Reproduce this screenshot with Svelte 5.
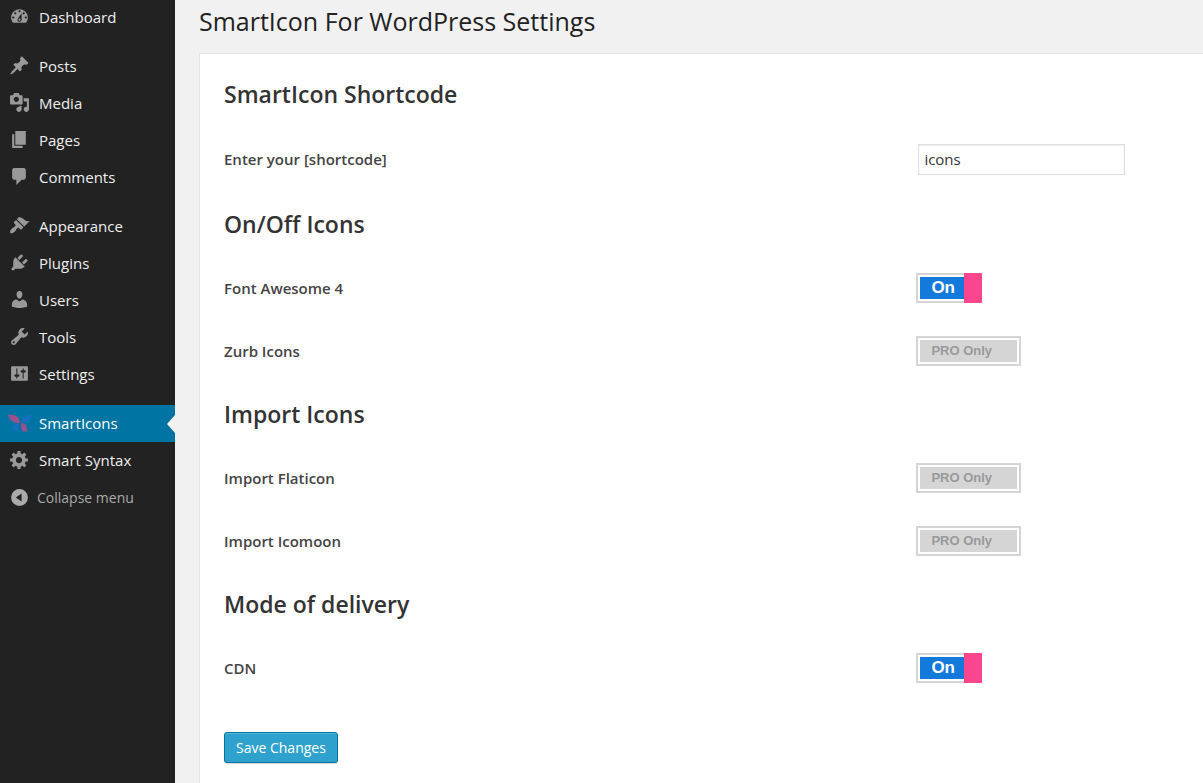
<script>
  const icons = {
    dashboard: 'M3.76 16h12.48c1.1-1.37 1.76-3.11 1.76-5 0-4.42-3.58-8-8-8s-8 3.58-8 8c0 1.89.66 3.63 1.76 5zM10 4c.55 0 1 .45 1 1s-.45 1-1 1-1-.45-1-1 .45-1 1-1zM6 6c.55 0 1 .45 1 1s-.45 1-1 1-1-.45-1-1 .45-1 1-1zm8 0c.55 0 1 .45 1 1s-.45 1-1 1-1-.45-1-1 .45-1 1-1zm-5.37 5.55L12 7v6c0 1.1-.9 2-2 2s-2-.9-2-2c0-.57.24-1.08.63-1.45zM4 10c.55 0 1 .45 1 1s-.45 1-1 1-1-.45-1-1 .45-1 1-1zm12 0c.55 0 1 .45 1 1s-.45 1-1 1-1-.45-1-1 .45-1 1-1zm-5 3c0-.55-.45-1-1-1s-1 .45-1 1 .45 1 1 1 1-.45 1-1z',
    post: 'M10.44 3.02l1.82-1.82 6.36 6.35-1.83 1.82c-1.05-.68-2.48-.57-3.41.36l-.75.75c-.92.93-1.04 2.35-.35 3.41l-1.83 1.82-2.41-2.41-2.8 2.79c-.42.42-3.38 2.71-3.8 2.29s1.86-3.39 2.28-3.81l2.79-2.79L4.1 9.36l1.83-1.82c1.05.69 2.48.57 3.4-.36l.75-.75c.93-.92 1.05-2.35.36-3.41z',
    media: 'M13 11V4c0-.55-.45-1-1-1h-1.67L9 1H5L3.67 3H2c-.55 0-1 .45-1 1v7c0 .55.45 1 1 1h10c.55 0 1-.45 1-1zM7 4.5c1.38 0 2.5 1.12 2.5 2.5S8.38 9.5 7 9.5 4.5 8.38 4.5 7 5.62 4.5 7 4.5zM14 6h5v10.5c0 1.38-1.12 2.5-2.5 2.5S14 17.88 14 16.5s1.12-2.5 2.5-2.5c.17 0 .34.02.5.05V9h-3V6zm-4 8.05V13h2v3.5c0 1.38-1.12 2.5-2.5 2.5S7 17.88 7 16.5 8.12 14 9.5 14c.17 0 .34.02.5.05z',
    page: 'M6 15V2h10v13H6zm-1 1h8v2H3V5h2v11z',
    comments: 'M5 2h9c1.1 0 2 .9 2 2v7c0 1.1-.9 2-2 2h-2l-5 5v-5H5c-1.1 0-2-.9-2-2V4c0-1.1.9-2 2-2z',
    appearance: 'M14.48 11.06L7.41 3.99l1.5-1.5c.5-.56 2.3-.47 3.51.32 1.21.8 1.43 1.28 2.91 2.1 1.18.64 2.45 1.26 4.45.85zm-.71.71L6.7 4.7 4.93 6.47c-.39.39-.39 1.02 0 1.41l1.06 1.06c.39.39.39 1.03 0 1.42-.6.6-1.43 1.11-2.21 1.69-.35.26-.7.53-1.01.84C1.43 14.23.4 16.08 1.4 17.07c.99 1 2.84-.03 4.18-1.36.31-.31.58-.66.85-1.02.57-.78 1.08-1.61 1.69-2.21.39-.39 1.02-.39 1.41 0l1.06 1.06c.39.39 1.02.39 1.41 0z',
    plugins: 'M13.11 4.36L9.87 7.6 8 5.73l3.24-3.24c.35-.34 1.05-.2 1.56.32.52.51.66 1.21.31 1.55zm-8 1.77l.91-1.12 9.01 9.01-1.19.84c-.71.71-2.63 1.16-3.82 1.16H6.14L4.9 17.26c-.59.59-1.54.59-2.12 0-.59-.58-.59-1.53 0-2.12l1.24-1.24v-3.88c0-1.13.4-3.19 1.09-3.89zm7.26 3.97l3.24-3.24c.34-.35 1.04-.21 1.55.31.52.51.66 1.21.31 1.55l-3.24 3.25z',
    users: 'M10 9.25c-2.27 0-2.73-3.44-2.73-3.44C7 4.02 7.82 2 9.97 2c2.16 0 2.98 2.02 2.71 3.81 0 0-.41 3.44-2.68 3.44zm0 2.57L12.72 10c2.39 0 4.52 2.33 4.52 4.53v2.49s-3.65 1.13-7.24 1.13c-3.65 0-7.24-1.13-7.24-1.13v-2.49c0-2.25 1.94-4.48 4.47-4.48z',
    tools: 'M16.68 9.77c-1.34 1.34-3.3 1.67-4.95.99l-5.41 6.52c-.99.99-2.59.99-3.58 0s-.99-2.59 0-3.57l6.52-5.42c-.68-1.65-.35-3.61.99-4.95 1.28-1.28 3.12-1.62 4.72-1.06l-2.89 2.89 2.82 2.82 2.86-2.87c.53 1.58.18 3.39-1.08 4.65zM3.81 16.21c.4.39 1.04.39 1.43 0 .4-.4.4-1.04 0-1.43-.39-.4-1.03-.4-1.43 0-.39.39-.39 1.03 0 1.43z',
    settings: 'M18 16V4c0-.55-.45-1-1-1H3c-.55 0-1 .45-1 1v12c0 .55.45 1 1 1h14c.55 0 1-.45 1-1zM8 11h1c.55 0 1 .45 1 1s-.45 1-1 1H8v1.5c0 .28-.22.5-.5.5s-.5-.22-.5-.5V13H6c-.55 0-1-.45-1-1s.45-1 1-1h1V5.5c0-.28.22-.5.5-.5s.5.22.5.5V11zm5-2h-1c-.55 0-1-.45-1-1s.45-1 1-1h1V5.5c0-.28.22-.5.5-.5s.5.22.5.5V7h1c.55 0 1 .45 1 1s-.45 1-1 1h-1v5.5c0 .28-.22.5-.5.5s-.5-.22-.5-.5V9z',
    generic: 'M18 12h-2.18c-.17.7-.44 1.35-.81 1.93l1.54 1.54-2.1 2.1-1.54-1.54c-.58.36-1.23.63-1.91.79V19H8v-2.18c-.68-.16-1.33-.43-1.91-.79l-1.54 1.54-2.12-2.12 1.54-1.54c-.36-.58-.63-1.23-.79-1.91H1V9.03h2.17c.16-.7.44-1.35.8-1.94L2.43 5.55l2.1-2.1 1.54 1.54c.58-.37 1.24-.64 1.93-.81V2h3v2.18c.68.16 1.33.43 1.91.79l1.54-1.54 2.12 2.12-1.54 1.54c.36.59.64 1.24.8 1.94H18V12zm-8.5 1.5c1.66 0 3-1.34 3-3s-1.34-3-3-3-3 1.34-3 3 1.34 3 3 3z',
    collapse: 'M10 2a8 8 0 1 0 0 16a8 8 0 1 0 0-16zM12 6.200v7.600L6.500 10z'
  };

  const groups = [
    [{ label: 'Dashboard', icon: 'dashboard' }],
    [
      { label: 'Posts', icon: 'post' },
      { label: 'Media', icon: 'media' },
      { label: 'Pages', icon: 'page' },
      { label: 'Comments', icon: 'comments' }
    ],
    [
      { label: 'Appearance', icon: 'appearance' },
      { label: 'Plugins', icon: 'plugins' },
      { label: 'Users', icon: 'users' },
      { label: 'Tools', icon: 'tools' },
      { label: 'Settings', icon: 'settings' }
    ],
    [
      { label: 'SmartIcons', icon: 'smart', current: true },
      { label: 'Smart Syntax', icon: 'generic' }
    ]
  ];

  let shortcode = $state('icons');

  const sections = $state([
    { title: 'SmartIcon Shortcode', rows: [{ id: 'shortcode', label: 'Enter your [shortcode]', type: 'text' }] },
    {
      title: 'On/Off Icons',
      rows: [
        { id: 'fontawesome', label: 'Font Awesome 4', type: 'switch', on: true },
        { id: 'zurb', label: 'Zurb Icons', type: 'pro' }
      ]
    },
    {
      title: 'Import Icons',
      rows: [
        { id: 'flaticon', label: 'Import Flaticon', type: 'pro' },
        { id: 'icomoon', label: 'Import Icomoon', type: 'pro' }
      ]
    },
    { title: 'Mode of delivery', rows: [{ id: 'cdn', label: 'CDN', type: 'switch', on: true }] }
  ]);
</script>

<div class="admin">
  <nav class="sidebar">
    {#each groups as group}
      <ul>
        {#each group as item}
          <li>
            <a href="#{item.icon}" class:current={item.current}>
              {#if item.icon === 'smart'}
                <svg class="logo" viewBox="0 0 24 18" aria-hidden="true">
                  <path fill="#9a528f" d="M0 1C5 0 11 1 12 9C7 10 2 7 0 1z" />
                  <path fill="#1470c0" d="M24 1C19 1 14 3 12.500 9C17 10 22 7 24 1z" />
                  <path fill="#1470c0" d="M11 10C8 9 5 11 4.500 14C5 17 9 18 11 15z" />
                  <path fill="#9a528f" d="M13 9C17 9 19.500 12 19 17.500H15C13 16 13 13 13 9z" />
                </svg>
              {:else}
                <svg viewBox="0 0 20 20" aria-hidden="true"><path fill-rule="evenodd" d={icons[item.icon]} /></svg>
              {/if}
              <span>{item.label}</span>
            </a>
          </li>
        {/each}
      </ul>
    {/each}
    <button type="button" class="collapse">
      <svg viewBox="0 0 20 20" aria-hidden="true"><path fill-rule="evenodd" d={icons.collapse} /></svg>
      <span>Collapse menu</span>
    </button>
  </nav>

  <main>
    <h1>SmartIcon For WordPress Settings</h1>
    <form class="card" onsubmit={(e) => e.preventDefault()}>
      {#each sections as section}
        <section>
          <h2>{section.title}</h2>
          {#each section.rows as row}
            <div class="row" class:field={row.type === 'text'}>
              <label for={row.id}>{row.label}</label>
              {#if row.type === 'text'}
                <input class="text" id={row.id} type="text" bind:value={shortcode} />
              {:else if row.type === 'switch'}
                <span class="switch">
                  <input id={row.id} type="checkbox" bind:checked={row.on} />
                  <span class="state">{row.on ? 'On' : 'Off'}</span>
                  <span class="knob"></span>
                </span>
              {:else}
                <button class="pro" id={row.id} type="button" disabled><span>PRO Only</span></button>
              {/if}
            </div>
          {/each}
        </section>
      {/each}
      <button class="save" type="submit">Save Changes</button>
    </form>
  </main>
</div>

<style>
  :global(body) {
    margin: 0;
    background: #f1f1f1;
  }

  .admin {
    display: flex;
    min-height: 100vh;
    font: 15px/20px 'Open Sans', sans-serif;
    color: #444;
  }

  .sidebar {
    flex: none;
    box-sizing: border-box;
    width: 175px;
    background: #222;
  }

  ul {
    margin: 0 0 12px;
    padding: 0;
    list-style: none;
  }

  ul:first-child {
    margin-top: -1px;
  }

  ul:last-of-type {
    margin-bottom: 0;
  }

  .sidebar a,
  .collapse {
    display: flex;
    align-items: center;
    box-sizing: border-box;
    gap: 9px;
    height: 37px;
    padding: 0 9px 2px;
    color: #eee;
    text-decoration: none;
  }

  .sidebar svg {
    flex: none;
    width: 21px;
    height: 21px;
    fill: #999;
  }

  .sidebar a.current {
    position: relative;
    background: #0074a2;
    color: #fff;
  }

  .sidebar a.current::after {
    content: '';
    position: absolute;
    top: 50%;
    right: 0;
    margin-top: -9px;
    border: solid transparent;
    border-width: 9px 8px 9px 0;
    border-right-color: #f1f1f1;
  }

  .sidebar .logo {
    width: 24px;
    height: 18px;
    margin: 0 -2px 0 -1px;
  }

  .collapse {
    width: 100%;
    gap: 7px;
    padding-bottom: 0;
    border: 0;
    background: none;
    font: 14px/20px 'Open Sans', sans-serif;
    color: #aaa;
  }

  .collapse svg {
    fill: #aaa;
  }

  main {
    flex: 1;
    display: flex;
    flex-direction: column;
    min-width: 0;
    padding-left: 24px;
  }

  h1 {
    margin: 5px 0 16px;
    font-size: 25px;
    line-height: 32px;
    font-weight: 400;
    color: #222;
  }

  .card {
    flex: 1;
    padding: 8px 24px 20px;
    border: 1px solid #e5e5e5;
    border-width: 1px 0 0 1px;
    background: #fff;
  }

  h2 {
    margin: 0;
    font-size: 23px;
    line-height: 64px;
    font-weight: 600;
    color: #333;
  }

  .row {
    display: grid;
    grid-template-columns: 29fr 11fr;
    align-items: center;
    min-height: 63px;
  }

  .row.field {
    min-height: 66px;
  }

  .row label {
    font-weight: 600;
  }

  .text {
    box-sizing: border-box;
    width: 207px;
    height: 31px;
    margin: 0 2px;
    padding: 3px 5px;
    border: 1px solid #ddd;
    background: #fff;
    box-shadow: inset 0 1px 2px rgba(0, 0, 0, 0.07);
    font: 15px/20px 'Open Sans', sans-serif;
    color: #333;
  }

  .switch,
  .pro {
    box-sizing: border-box;
    justify-self: start;
    height: 30px;
    padding: 2px;
    border: 2px solid #d5d5d5;
    background: #fff;
    font-family: 'Liberation Sans', Arial, sans-serif;
    font-weight: 700;
  }

  .switch {
    position: relative;
    display: flex;
    width: 66px;
  }

  .switch input {
    position: absolute;
    inset: 0;
    z-index: 1;
    width: 100%;
    height: 100%;
    margin: 0;
    opacity: 0;
  }

  .state {
    flex: none;
    box-sizing: border-box;
    width: 44px;
    padding-left: 11px;
    background: #1379da;
    font-size: 17px;
    line-height: 22px;
    color: #fff;
  }

  .knob {
    flex: none;
    width: 18px;
    height: 30px;
    margin-top: -4px;
    background: #f9468d;
  }

  .pro {
    width: 105px;
    font-size: 13px;
    line-height: 22px;
    color: #999;
    text-align: left;
  }

  .pro span {
    display: block;
    padding-left: 11px;
    background: #d5d5d5;
  }

  .save {
    height: 31px;
    margin-top: 33px;
    padding: 0 11px;
    border: 1px solid #0074a2;
    border-radius: 3px;
    background: #2ea2cc;
    box-shadow: inset 0 1px 0 rgba(120, 200, 230, 0.5), 0 1px 0 rgba(0, 0, 0, 0.15);
    font: 14px/20px 'Open Sans', sans-serif;
    color: #fff;
  }
</style>
